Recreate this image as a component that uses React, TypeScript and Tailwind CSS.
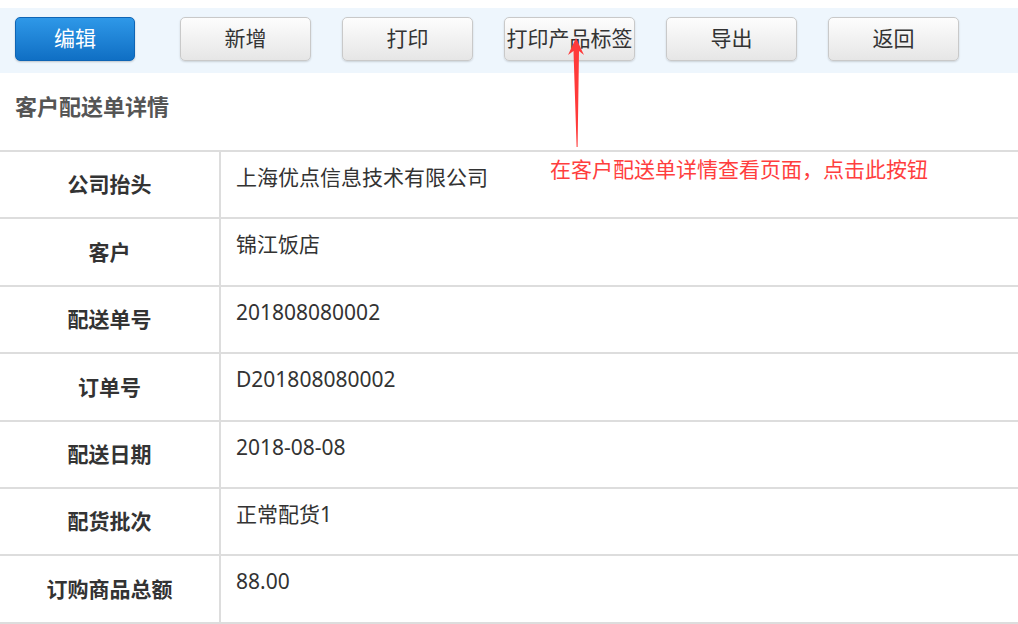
import React from "react";

const rows: [string, string][] = [
  ["公司抬头", "上海优点信息技术有限公司"],
  ["客户", "锦江饭店"],
  ["配送单号", "201808080002"],
  ["订单号", "D201808080002"],
  ["配送日期", "2018-08-08"],
  ["配货批次", "正常配货1"],
  ["订购商品总额", "88.00"],
];

const greyBtn =
  "h-[44px] w-[131px] rounded-[5px] border border-[#c9c9c9] bg-gradient-to-b from-[#fdfdfd] to-[#e6e6e6] text-[21px] text-[#333] shadow-[0_1px_2px_rgba(0,0,0,0.15)] flex items-center justify-center whitespace-nowrap";

export default function App() {
  return (
    <div
      className="relative w-[1018px] h-[624px] overflow-hidden bg-white"
      style={{ fontFamily: '"Noto Sans", "Noto Sans CJK SC", sans-serif' }}
    >
      <div className="mt-[8px] h-[65px] bg-[#eef6fd] flex items-start pt-[9px] pl-[15px]">
        <button className="h-[44px] w-[120px] rounded-[5px] border border-[#0f65b5] bg-gradient-to-b from-[#2e98e8] to-[#0f6fc4] text-[21px] text-white flex items-center justify-center shadow-[0_1px_2px_rgba(0,0,0,0.2)]">
          编辑
        </button>
        <div className="ml-[45px] flex gap-[31px]">
          <button className={greyBtn}>新增</button>
          <button className={greyBtn}>打印</button>
          <button className={greyBtn}>打印产品标签</button>
          <button className={greyBtn}>导出</button>
          <button className={greyBtn}>返回</button>
        </div>
      </div>

      <div className="h-[77px] pl-[15px] pt-[19px]">
        <div className="text-[22px] leading-[28px] font-bold text-[#555]">客户配送单详情</div>
      </div>

      <div className="w-full">
        {rows.map(([k, v]) => (
          <div key={k} className="flex h-[67.4px] border-t-2 border-[#dddddd]">
            <div className="w-[219px] flex items-center justify-center text-[21px] font-bold text-[#333] pt-[1px]">
              {k}
            </div>
            <div className="flex-1 border-l-2 border-[#dddddd] pl-[15px] pt-[11px] text-[21px] leading-[28px] text-[#333]">
              {v}
            </div>
          </div>
        ))}
        <div className="border-t-2 border-[#dddddd]" />
      </div>

      <svg
        className="absolute left-0 top-0 pointer-events-none"
        width="1018"
        height="624"
        viewBox="0 0 1018 624"
      >
        <polygon
          points="576,38 584,55 579,51 577.6,147 576.6,147 573.5,51 568,55"
          fill="#ff3a3a"
        />
      </svg>
      <div className="absolute left-[550px] top-[156px] text-[21px] leading-[26px] text-[#ff3e3e] whitespace-nowrap">
        在客户配送单详情查看页面，点击此按钮
      </div>
    </div>
  );
}
